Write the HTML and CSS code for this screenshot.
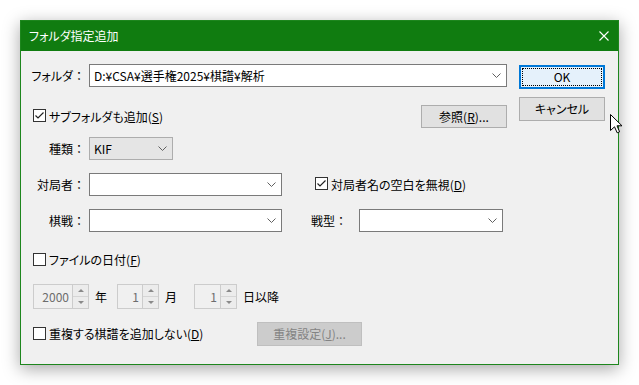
FILE: index.html
```html
<!DOCTYPE html>
<html lang="ja">
<head>
    <meta charset="UTF-8">
    <meta name="viewport" content="width=device-width, initial-scale=1.0">
    <title>フォルダ指定追加</title>
    <link rel="stylesheet" href="styles.css">
</head>
<body>
    <div class="dialog">
        <div class="titlebar">
            <span class="title">フォルダ指定追加</span>
            <svg class="close" width="10" height="10" viewBox="0 0 10 10">
                <path d="M0.5 0.5L9.5 9.5M9.5 0.5L0.5 9.5" stroke="#fff" stroke-width="1.1" fill="none"/>
            </svg>
        </div>

        <div class="content">
            <div class="form">
                <!-- folder -->
                <div class="row row-folder">
                    <span class="label"><span>フォルダ<span class="colon">：</span></span></span>
                    <div class="combo combo-folder">
                        <span class="value">D:¥CSA¥選手権2025¥棋譜¥解析</span>
                        <svg class="chevron" width="9" height="5" viewBox="0 0 9 5"><path d="M0.5 0.5L4.5 4.5L8.5 0.5" stroke="#606060" fill="none"/></svg>
                    </div>
                </div>

                <div class="row row-sub">
                    <label class="check">
                        <span class="box"><svg width="11" height="11" viewBox="0 0 11 11"><path d="M1.5 5.5L4 8L9.5 2.5" stroke="#222" stroke-width="1.2" fill="none"/></svg></span>
                        <span class="text">サブフォルダも追加(<u>S</u>)</span>
                    </label>
                    <button class="btn btn-browse">参照(<u>R</u>)...</button>
                </div>

                <div class="row row-type">
                    <span class="label"><span>種類<span class="colon">：</span></span></span>
                    <div class="combo combo-type">
                        <span class="value">KIF</span>
                        <svg class="chevron" width="9" height="5" viewBox="0 0 9 5"><path d="M0.5 0.5L4.5 4.5L8.5 0.5" stroke="#606060" fill="none"/></svg>
                    </div>
                </div>

                <div class="row row-player">
                    <span class="label"><span>対局者<span class="colon">：</span></span></span>
                    <div class="combo combo-mid">
                        <span class="value"></span>
                        <svg class="chevron" width="9" height="5" viewBox="0 0 9 5"><path d="M0.5 0.5L4.5 4.5L8.5 0.5" stroke="#606060" fill="none"/></svg>
                    </div>
                    <label class="check check-space">
                        <span class="box"><svg width="11" height="11" viewBox="0 0 11 11"><path d="M1.5 5.5L4 8L9.5 2.5" stroke="#222" stroke-width="1.2" fill="none"/></svg></span>
                        <span class="text">対局者名の空白を無視(<u>D</u>)</span>
                    </label>
                </div>

                <div class="row row-event">
                    <span class="label"><span>棋戦<span class="colon">：</span></span></span>
                    <div class="combo combo-mid">
                        <span class="value"></span>
                        <svg class="chevron" width="9" height="5" viewBox="0 0 9 5"><path d="M0.5 0.5L4.5 4.5L8.5 0.5" stroke="#606060" fill="none"/></svg>
                    </div>
                    <span class="label label-style"><span>戦型<span class="colon">：</span></span></span>
                    <div class="combo combo-style">
                        <span class="value"></span>
                        <svg class="chevron" width="9" height="5" viewBox="0 0 9 5"><path d="M0.5 0.5L4.5 4.5L8.5 0.5" stroke="#606060" fill="none"/></svg>
                    </div>
                </div>

                <div class="row row-date">
                    <label class="check">
                        <span class="box"></span>
                        <span class="text">ファイルの日付(<u>F</u>)</span>
                    </label>
                </div>

                <!-- date spinners (disabled) -->
                <div class="row row-spin">
                    <div class="spin spin-year">
                        <span class="spin-val">2000</span>
                        <span class="spin-btns"><span class="up"></span><span class="down"></span></span>
                    </div>
                    <span class="unit">年</span>
                    <div class="spin spin-month">
                        <span class="spin-val">1</span>
                        <span class="spin-btns"><span class="up"></span><span class="down"></span></span>
                    </div>
                    <span class="unit">月</span>
                    <div class="spin spin-day">
                        <span class="spin-val">1</span>
                        <span class="spin-btns"><span class="up"></span><span class="down"></span></span>
                    </div>
                    <span class="unit">日以降</span>
                </div>

                <div class="row row-dup">
                    <label class="check">
                        <span class="box"></span>
                        <span class="text">重複する棋譜を追加しない(<u>D</u>)</span>
                    </label>
                    <button class="btn btn-disabled">重複設定(<u>J</u>)...</button>
                </div>
            </div>

            <div class="side">
                <button class="btn btn-ok">OK</button>
                <button class="btn">キャンセル</button>
            </div>
        </div>
    </div>

    <svg class="cursor" width="13" height="20" viewBox="0 0 13 20">
        <path d="M0.5 0.5L0.5 16.5L4.5 12.8L7.2 18.8L9.6 17.8L7 11.8L12 11.8Z" fill="#fff" stroke="#000" stroke-width="1"/>
    </svg>
</body>
</html>
```

FILE: styles.css
```css
/* General Styles */
* {
    box-sizing: border-box;
}

body {
    margin: 0;
    padding: 20px;
    height: 385px;
    overflow: hidden;
    position: relative;
    background-color: #ffffff;
    font-family: "Noto Sans CJK JP", "Noto Sans", sans-serif;
    font-size: 12px;
    line-height: 16px;
    color: #000000;
    font-feature-settings: "palt";
}

.dialog {
    width: 599px;
    height: 345px;
    background-color: #f0f0f0;
    border: 1px solid #1d861d;
    box-shadow: 0 4px 16px rgba(0, 0, 0, 0.35);
}

.titlebar {
    height: 30px;
    background-color: #107c10;
    color: #ffffff;
    display: flex;
    align-items: center;
    justify-content: space-between;
    padding: 0 9px 0 8px;
}

.content {
    display: flex;
    gap: 12px;
    padding: 13px 12px 0;
}

.form {
    width: 474px;
}

.side {
    display: flex;
    flex-direction: column;
    gap: 8px;
    padding-top: 1px;
}

/* rows */
.row {
    display: flex;
    align-items: center;
}

.row-folder { height: 23px; }
.row-sub { height: 23px; margin-top: 18px; justify-content: space-between; }
.row-type { height: 23px; margin-top: 9px; }
.row-player { height: 23px; margin-top: 13px; }
.row-event { height: 23px; margin-top: 13px; }
.row-date { height: 16px; margin-top: 20px; }
.row-spin { height: 25px; margin-top: 16px; }
.row-dup {
    height: 24px;
    margin-top: 13px;
    display: grid;
    grid-template-columns: 224px 105px;
    align-items: center;
}

.label {
    width: 56px;
    display: flex;
    justify-content: flex-end;
    padding-right: 4px;
    flex-shrink: 0;
    white-space: nowrap;
}

.colon {
    font-feature-settings: normal;
}

.label-style {
    width: 48px;
    justify-content: flex-start;
    padding-right: 0;
    margin-left: 29px;
}

/* combo boxes */
.combo {
    display: flex;
    align-items: center;
    justify-content: space-between;
    height: 23px;
    background-color: #ffffff;
    border: 1px solid #7a7a7a;
    padding: 0 5px 0 4px;
}

.combo-folder { width: 418px; }
.combo-mid { width: 193px; }
.combo-style { width: 144px; }

.combo-type {
    width: 84px;
    background-color: #e5e5e5;
    border-color: #adadad;
}

.chevron {
    flex-shrink: 0;
}

/* check boxes */
.check {
    display: flex;
    align-items: center;
    gap: 3px;
    white-space: nowrap;
}

.box {
    width: 13px;
    height: 13px;
    border: 1px solid #333333;
    background-color: #ffffff;
    display: flex;
    align-items: center;
    justify-content: center;
    margin-top: -2px;
}

.check-space {
    margin-left: 33px;
}

/* buttons */
.btn {
    width: 86px;
    height: 24px;
    padding: 0;
    font-family: inherit;
    font-size: 12px;
    line-height: 16px;
    color: #000000;
    background-color: #e1e1e1;
    border: 1px solid #adadad;
    font-feature-settings: "palt";
}

.btn-ok {
    position: relative;
    background-color: #e5f1fb;
    border: 2px solid #0078d7;
}

.btn-ok::after {
    content: "";
    position: absolute;
    inset: 1px;
    border: 1px dotted #000000;
}

.btn-browse {
    height: 23px;
}

.btn-disabled {
    width: 105px;
    background-color: #cccccc;
    border-color: #bfbfbf;
    color: #838383;
}

/* spinners */
.spin {
    display: flex;
    height: 25px;
    border: 1px solid #cccccc;
    background-color: #f0f0f0;
    color: #6d6d6d;
}

.spin-year { width: 56px; }
.spin-month { width: 42px; margin-left: 10px; }
.spin-day { width: 43px; margin-left: 17px; }

.spin-val {
    flex: 1;
    text-align: right;
    padding-right: 3px;
    line-height: 23px;
}

.spin-btns {
    width: 16px;
    display: flex;
    flex-direction: column;
    border-left: 1px solid #cccccc;
}

.spin-btns span {
    flex: 1;
    display: flex;
    align-items: center;
    justify-content: center;
    background-color: #ececec;
}

.spin-btns .up {
    border-bottom: 1px solid #d6d6d6;
}

.spin-btns .up::before {
    content: "";
    border-left: 3px solid transparent;
    border-right: 3px solid transparent;
    border-bottom: 3px solid #8a8a8a;
}

.spin-btns .down::before {
    content: "";
    border-left: 3px solid transparent;
    border-right: 3px solid transparent;
    border-top: 3px solid #8a8a8a;
}

.unit {
    margin-left: 6px;
}

/* mouse pointer over the dialog */
.cursor {
    position: absolute;
    left: 610px;
    top: 114px;
}
```
